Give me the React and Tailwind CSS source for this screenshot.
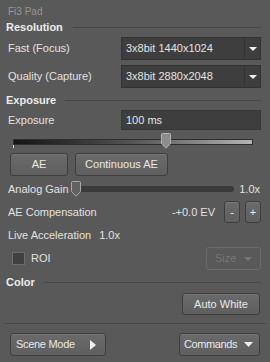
import React from "react";

const Tri = ({ className = "", dir = "down", color = "#f0f0f0", w = 8, h = 5 }) => (
  <svg width={w} height={h} viewBox={`0 0 ${w} ${h}`} className={className}>
    {dir === "down" ? (
      <polygon points={`0,0 ${w},0 ${w / 2},${h}`} fill={color} />
    ) : (
      <polygon points={`0,0 ${w},${h / 2} 0,${h}`} fill={color} />
    )}
  </svg>
);

const Header = ({ label, gap = "ml-[10px]" }) => (
  <div className="flex items-center h-[14px] pl-[6px] pr-[9px]">
    <span className="font-bold text-[11px] text-[#ececec] leading-none">{label}</span>
    <div className={`flex-1 h-px bg-[#474747] ${gap}`} />
  </div>
);

const Btn = ({ children, className = "", between = false }) => (
  <div
    className={`flex items-center ${between ? "justify-between" : "justify-center"} rounded-[3px] border border-[#3e3e3e] bg-gradient-to-b from-[#6a6a6a] to-[#5f5f5f] shadow-[inset_0_1px_0_#767676] text-[#e8e8e8] text-[11px] ${className}`}
  >
    {children}
  </div>
);

const Dropdown = ({ text }) => (
  <div className="flex w-[140px] h-[23px] border border-[#333333] bg-[#3e3e3e]">
    <div className="flex-1 flex items-center pl-[4px] text-[#e4e4e4] text-[11px]">{text}</div>
    <div className="w-[16px] border-l border-[#333333] flex items-center justify-center">
      <Tri w={8} h={4} />
    </div>
  </div>
);

const Thumb = ({ fill = "#8a8a8a", stroke = "#b0b0b0" }) => (
  <svg width="10" height="16" viewBox="0 0 10 16">
    <path
      d="M1.5 0.5 H8.5 A1 1 0 0 1 9.5 1.5 V10.5 L5 15.2 L0.5 10.5 V1.5 A1 1 0 0 1 1.5 0.5 Z"
      fill={fill}
      stroke={stroke}
      strokeWidth="1"
    />
  </svg>
);

export default function App() {
  return (
    <div
      className="w-[270px] h-[362px] bg-[#595959] text-[#e2e2e2] text-[11px] overflow-hidden pt-[2px]"
      style={{ fontFamily: '"Liberation Sans", Arial, sans-serif' }}
    >
      {/* Title */}
      <div className="h-[18px] flex items-center pl-[8px] text-[10px] text-[#979797]">Fi3 Pad</div>

      <Header label="Resolution" />

      <div className="mt-[3px] flex items-center pl-[8px] pr-[9px] h-[23px]">
        <span className="w-[113px]">Fast (Focus)</span>
        <Dropdown text="3x8bit 1440x1024" />
      </div>
      <div className="mt-[5px] flex items-center pl-[8px] pr-[9px] h-[23px]">
        <span className="w-[113px]">Quality (Capture)</span>
        <Dropdown text="3x8bit 2880x2048" />
      </div>

      <div className="mt-[5px]">
        <Header label="Exposure" gap="ml-[9px]" />
      </div>

      <div className="mt-[3px] flex items-center pl-[8px] pr-[9px] h-[20px]">
        <span className="w-[113px]">Exposure</span>
        <div className="w-[140px] h-[20px] border border-[#363636] bg-[#3e3e3e] flex items-center pl-[4px] text-[#e4e4e4]">
          100 ms
        </div>
      </div>

      {/* exposure slider */}
      <div className="mt-[1px] h-[20px] pl-[13px] pr-[17px] flex items-center">
        <div className="relative w-[240px] h-[20px]">
          <div className="absolute left-0 right-0 top-[8px] h-[6px] border border-[#2e2e2e] bg-gradient-to-r from-[#141414] via-[#555555] to-[#b4b4b4]" />
          <div className="absolute left-0 top-[14px] w-px h-[3px] bg-[#f0f0f0]" />
          <div className="absolute left-[148px] top-[2px]">
            <Thumb fill="#8c8c8c" stroke="#b4b4b4" />
          </div>
        </div>
      </div>

      <div className="mt-[2px] flex pl-[10px] gap-[7px] h-[23px]">
        <Btn className="w-[58px]">AE</Btn>
        <Btn className="w-[93px]">Continuous AE</Btn>
      </div>

      {/* analog gain */}
      <div className="mt-[3px] h-[20px] flex items-center pl-[8px] pr-[10px]">
        <span className="w-[63px]">Analog Gain</span>
        <div className="relative w-[163px] h-[20px]">
          <div className="absolute left-[1px] right-0 top-[7px] h-[6px] rounded-r-full bg-[#3a3a3a]" />
          <div className="absolute left-0 top-[2px]">
            <Thumb fill="#616161" stroke="#a8a8a8" />
          </div>
        </div>
        <span className="ml-auto">1.0x</span>
      </div>

      {/* AE compensation */}
      <div className="mt-[2px] h-[22px] flex items-center pl-[8px] pr-[9px]">
        <span>AE Compensation</span>
        <span className="ml-auto mr-[9px]">-+0.0 EV</span>
        <Btn className="w-[16px] h-[22px]">-</Btn>
        <Btn className="w-[16px] h-[22px] ml-[5px]">+</Btn>
      </div>

      <div className="mt-[2px] h-[20px] flex items-center pl-[8px]">
        <span>Live Acceleration</span>
        <span className="ml-[8px]">1.0x</span>
      </div>

      {/* ROI / Size */}
      <div className="mt-[2px] h-[23px] flex items-center pl-[12px] pr-[9px]">
        <div className="w-[13px] h-[13px] border border-[#6e6e6e] bg-[#404040]" />
        <span className="ml-[6px]">ROI</span>
        <div className="ml-auto w-[55px] h-[23px] rounded-[3px] border border-[#6c6c6c] flex items-center pl-[8px] gap-[8px] text-[#767676]">
          <span>Size</span>
          <Tri w={8} h={4} color="#767676" />
        </div>
      </div>

      <div className="mt-[5px]">
        <Header label="Color" gap="ml-[9px]" />
      </div>

      <div className="mt-[4px] flex justify-end pr-[10px] h-[22px]">
        <Btn className="w-[78px]">Auto White</Btn>
      </div>

      <div className="mt-[8px] mx-[5px] h-px bg-[#474747]" />

      <div className="mt-[9px] flex justify-between pl-[10px] pr-[10px] h-[23px]">
        <Btn between className="w-[96px] pl-[5px] pr-[9px]">
          <span className="tracking-[-0.3px]">Scene Mode</span>
          <Tri dir="right" w={6} h={10} color="#efefef" />
        </Btn>
        <Btn between className="w-[81px] pl-[4px] pr-[6px]">
          <span className="tracking-[-0.4px]">Commands</span>
          <Tri w={9} h={5} color="#efefef" />
        </Btn>
      </div>
    </div>
  );
}
